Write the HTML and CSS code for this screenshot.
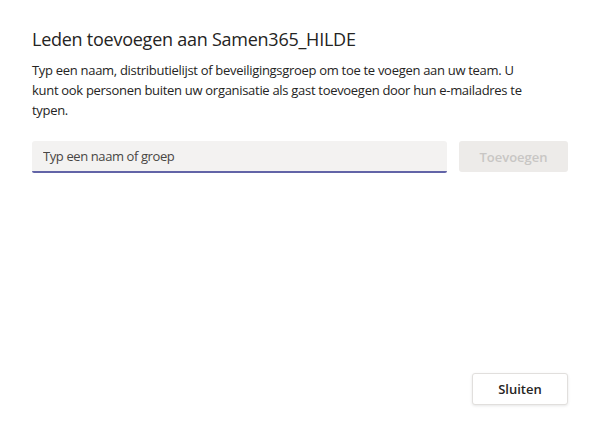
FILE: index.html
```html
<!DOCTYPE html>
<html lang="nl">

<head>
    <meta charset="UTF-8" />
    <title>Leden toevoegen</title>
    <link rel="stylesheet" href="styles.css">
</head>

<body>
    <div class="dialog">
        <h2 class="dialog-title">Leden toevoegen aan Samen365_HILDE</h2>
        <p class="dialog-text">Typ een naam, distributielijst of beveiligingsgroep om toe te voegen aan uw team. U kunt ook personen buiten uw organisatie als gast toevoegen door hun e-mailadres te typen.</p>
        <div class="add-row">
            <input type="text" class="member-input" placeholder="Typ een naam of groep" />
            <button class="add-button" disabled>Toevoegen</button>
        </div>
        <div class="dialog-footer">
            <button class="close-button">Sluiten</button>
        </div>
    </div>
</body>

</html>
```
FILE: styles.css
```css
* {
    box-sizing: border-box;
}

body {
    margin: 0;
    background-color: #fff;
    font-family: "Open Sans", "Noto Sans", sans-serif;
    color: #252423;
}

.dialog {
    height: 436px;
    padding: 27px 31px 31px 32px;
    display: flex;
    flex-direction: column;
}

.dialog-title {
    margin: 0;
    font-size: 18px;
    font-weight: 400;
    line-height: 24px;
    letter-spacing: -0.25px;
}

.dialog-text {
    max-width: 500px;
    margin: 9px 0 0 0;
    font-size: 13px;
    line-height: 20px;
    letter-spacing: -0.3px;
    color: #252423;
}

.add-row {
    margin-top: 21px;
    display: flex;
    gap: 12px;
}

.member-input {
    flex: 1;
    height: 32px;
    padding: 0 10px 0 11px;
    background-color: #f3f2f1;
    border: none;
    border-bottom: 2px solid #6264a7;
    border-radius: 3px 3px 2px 2px;
    font-family: inherit;
    font-size: 13px;
    letter-spacing: -0.4px;
    color: #252423;
    outline: none;
}

.member-input::placeholder {
    color: #484644;
}

.add-button {
    width: 109px;
    height: 31px;
    background-color: #edebe9;
    border: none;
    border-radius: 3px;
    font-family: inherit;
    font-size: 13px;
    font-weight: 600;
    color: #c8c6c4;
}

.dialog-footer {
    margin-top: auto;
    display: flex;
    justify-content: flex-end;
}

.close-button {
    width: 96px;
    height: 32px;
    background-color: #fff;
    border: 1px solid #e1dfdd;
    border-radius: 3px;
    box-shadow: 0 1px 3px rgba(0, 0, 0, 0.1);
    font-family: inherit;
    font-size: 13px;
    font-weight: 600;
    color: #252423;
}
```
